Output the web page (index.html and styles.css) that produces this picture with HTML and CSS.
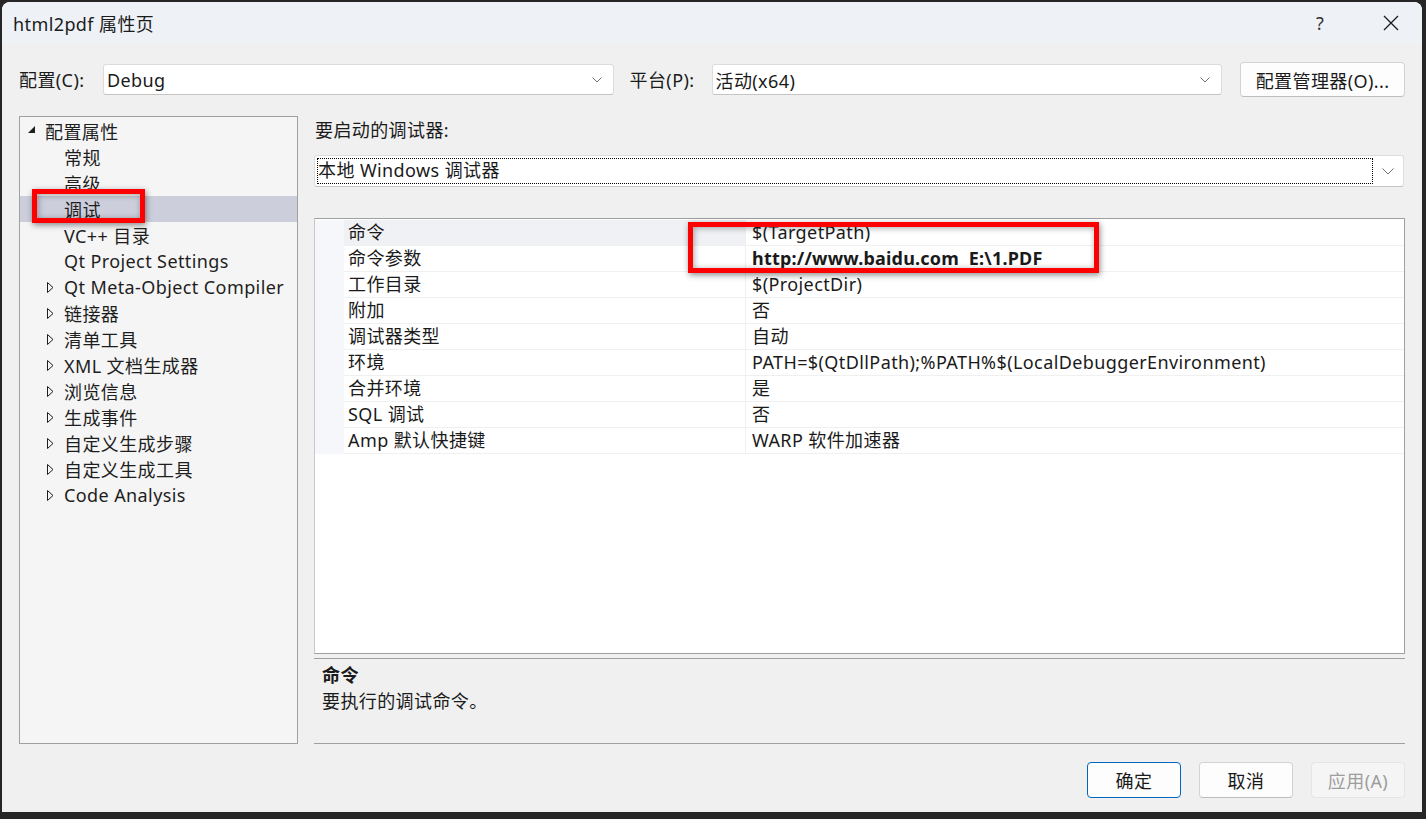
FILE: index.html
```html
<!DOCTYPE html>
<html lang="zh-CN">
<head>
    <meta charset="UTF-8">
    <title>html2pdf 属性页</title>
    <link rel="stylesheet" href="styles.css">
</head>
<body>
    <div class="window">
        <div class="titlebar">
            <span class="title">html2pdf 属性页</span>
            <span class="cap-help">?</span>
            <span class="cap-close">
                <svg width="16" height="16" viewBox="0 0 16 16"><path d="M1 1 L15 15 M15 1 L1 15" stroke="#1b1b1b" stroke-width="1.3" fill="none"/></svg>
            </span>
        </div>

        <div class="content">
            <div class="config-row">
                <span class="lbl">配置(C):</span>
                <div class="combo combo-config">
                    <span class="combo-text">Debug</span>
                    <svg class="chev" width="10" height="6" viewBox="0 0 10 6"><path d="M0.5 0.5 L5 5 L9.5 0.5" stroke="#707070" fill="none"/></svg>
                </div>
                <span class="lbl lbl-platform">平台(P):</span>
                <div class="combo combo-platform">
                    <span class="combo-text">活动(x64)</span>
                    <svg class="chev" width="10" height="6" viewBox="0 0 10 6"><path d="M0.5 0.5 L5 5 L9.5 0.5" stroke="#707070" fill="none"/></svg>
                </div>
                <button class="btn btn-manager">配置管理器(O)...</button>
            </div>

            <div class="main">
                <div class="tree">
                    <div class="node lvl0">
                        <span class="exp"><svg width="8" height="8" viewBox="0 0 8 8"><polygon points="7,0 7,7 0,7" fill="#1e1e1e"/></svg></span>
                        <span>配置属性</span>
                    </div>
                    <div class="node lvl1"><span class="exp"></span><span>常规</span></div>
                    <div class="node lvl1"><span class="exp"></span><span>高级</span></div>
                    <div class="node lvl1 selected"><span class="exp"></span><span>调试</span></div>
                    <div class="node lvl1"><span class="exp"></span><span>VC++ 目录</span></div>
                    <div class="node lvl1"><span class="exp"></span><span>Qt Project Settings</span></div>
                    <div class="node lvl1"><span class="exp"><svg class="tri" width="7" height="11" viewBox="0 0 7 11"><polygon points="0.5,0.5 6,5.5 0.5,10.5" fill="none" stroke="#1e1e1e"/></svg></span><span>Qt Meta-Object Compiler</span></div>
                    <div class="node lvl1"><span class="exp"><svg class="tri" width="7" height="11" viewBox="0 0 7 11"><polygon points="0.5,0.5 6,5.5 0.5,10.5" fill="none" stroke="#1e1e1e"/></svg></span><span>链接器</span></div>
                    <div class="node lvl1"><span class="exp"><svg class="tri" width="7" height="11" viewBox="0 0 7 11"><polygon points="0.5,0.5 6,5.5 0.5,10.5" fill="none" stroke="#1e1e1e"/></svg></span><span>清单工具</span></div>
                    <div class="node lvl1"><span class="exp"><svg class="tri" width="7" height="11" viewBox="0 0 7 11"><polygon points="0.5,0.5 6,5.5 0.5,10.5" fill="none" stroke="#1e1e1e"/></svg></span><span>XML 文档生成器</span></div>
                    <div class="node lvl1"><span class="exp"><svg class="tri" width="7" height="11" viewBox="0 0 7 11"><polygon points="0.5,0.5 6,5.5 0.5,10.5" fill="none" stroke="#1e1e1e"/></svg></span><span>浏览信息</span></div>
                    <div class="node lvl1"><span class="exp"><svg class="tri" width="7" height="11" viewBox="0 0 7 11"><polygon points="0.5,0.5 6,5.5 0.5,10.5" fill="none" stroke="#1e1e1e"/></svg></span><span>生成事件</span></div>
                    <div class="node lvl1"><span class="exp"><svg class="tri" width="7" height="11" viewBox="0 0 7 11"><polygon points="0.5,0.5 6,5.5 0.5,10.5" fill="none" stroke="#1e1e1e"/></svg></span><span>自定义生成步骤</span></div>
                    <div class="node lvl1"><span class="exp"><svg class="tri" width="7" height="11" viewBox="0 0 7 11"><polygon points="0.5,0.5 6,5.5 0.5,10.5" fill="none" stroke="#1e1e1e"/></svg></span><span>自定义生成工具</span></div>
                    <div class="node lvl1"><span class="exp"><svg class="tri" width="7" height="11" viewBox="0 0 7 11"><polygon points="0.5,0.5 6,5.5 0.5,10.5" fill="none" stroke="#1e1e1e"/></svg></span><span>Code Analysis</span></div>
                </div>

                <div class="pane">
                    <div class="pane-label">要启动的调试器:</div>
                    <div class="combo combo-debugger">
                        <span class="focus-rect">本地 Windows 调试器</span>
                        <span class="drop">
                            <svg width="12" height="7" viewBox="0 0 12 7"><path d="M0.5 0.5 L6 6 L11.5 0.5" stroke="#707070" fill="none"/></svg>
                        </span>
                    </div>

                    <div class="grid">
                        <div class="row current">
                            <span class="gutter"></span><span class="name">命令</span><span class="value">$(TargetPath)</span>
                        </div>
                        <div class="row">
                            <span class="gutter"></span><span class="name">命令参数</span><span class="value bold">http://www.baidu.com&nbsp;&nbsp;E:\1.PDF</span>
                        </div>
                        <div class="row">
                            <span class="gutter"></span><span class="name">工作目录</span><span class="value">$(ProjectDir)</span>
                        </div>
                        <div class="row">
                            <span class="gutter"></span><span class="name">附加</span><span class="value">否</span>
                        </div>
                        <div class="row">
                            <span class="gutter"></span><span class="name">调试器类型</span><span class="value">自动</span>
                        </div>
                        <div class="row">
                            <span class="gutter"></span><span class="name">环境</span><span class="value">PATH=$(QtDllPath);%PATH%$(LocalDebuggerEnvironment)</span>
                        </div>
                        <div class="row">
                            <span class="gutter"></span><span class="name">合并环境</span><span class="value">是</span>
                        </div>
                        <div class="row">
                            <span class="gutter"></span><span class="name">SQL 调试</span><span class="value">否</span>
                        </div>
                        <div class="row">
                            <span class="gutter"></span><span class="name">Amp 默认快捷键</span><span class="value">WARP 软件加速器</span>
                        </div>
                    </div>

                    <div class="desc">
                        <div class="desc-title">命令</div>
                        <div>要执行的调试命令。</div>
                    </div>
                </div>
            </div>

            <div class="footer">
                <button class="btn btn-ok">确定</button>
                <button class="btn">取消</button>
                <button class="btn btn-disabled">应用(A)</button>
            </div>
        </div>
    </div>

    <!-- annotation boxes drawn over the screenshot -->
    <div class="mark mark-tree"></div>
    <div class="mark mark-args"></div>
</body>
</html>
```

FILE: styles.css
```css
body {
    margin: 0;
    padding: 2px 4px 0 2px;
    background: #262626;
    font-family: "Noto Sans", "Noto Sans CJK SC", sans-serif;
    font-size: 18px;
    letter-spacing: 0.4px;
    color: #1a1a1a;
    overflow: hidden;
    height: 819px;
    box-sizing: border-box;
    position: relative;
}
.window {
    width: 1420px;
    height: 810px;
    background: #f0f0f0;
    border-radius: 8px 8px 0 0;
    overflow: hidden;
    display: flex;
    flex-direction: column;
}
.titlebar {
    height: 41px;
    background: #eef2f7;
    display: flex;
    align-items: center;
    padding-left: 11px;
}
.title {
    flex: 1;
    font-size: 18px;
    color: #1b1b1b;
}
.cap-help {
    width: 40px;
    margin-right: 20px;
    text-align: center;
    font-size: 18px;
    color: #333;
}
.cap-close {
    width: 62px;
    display: flex;
    justify-content: center;
}
.content {
    flex: 1;
    display: flex;
    flex-direction: column;
    padding: 19px 17px 14px 17px;
}
.config-row {
    display: flex;
    align-items: center;
    height: 35px;
}
.lbl {
    width: 84px;
    line-height: 26px;
}
.lbl-platform {
    width: 82px;
    margin-left: 16px;
}
.combo {
    background: #ffffff;
    border: 1px solid #dcdcdc;
    border-bottom-color: #c4c4c4;
    border-radius: 3px;
    display: flex;
    align-items: center;
    box-sizing: border-box;
}
.combo-config, .combo-platform {
    width: 511px;
    height: 31px;
    padding: 0 11px 0 3px;
}
.combo-text {
    flex: 1;
}
.btn-manager {
    margin-left: 18px;
    width: 165px;
    height: 35px;
}
.btn {
    font-family: inherit;
    font-size: 18px;
    letter-spacing: 0.4px;
    color: #1a1a1a;
    background: #fdfdfd;
    border: 1px solid #d3d3d3;
    border-bottom-color: #bdbdbd;
    border-radius: 4px;
    padding: 0;
}
.main {
    margin-top: 19px;
    height: 628px;
    display: flex;
    gap: 16px;
}
.tree {
    width: 279px;
    box-sizing: border-box;
    border: 1px solid #a0a0a0;
    background: #f5f5f5;
    padding-top: 1px;
}
.node {
    height: 26px;
    display: flex;
    align-items: center;
    white-space: nowrap;
    color: #1e1e1e;
}
.node.lvl0 {
    padding-left: 8px;
}
.node.lvl1 {
    padding-left: 27px;
}
.node.selected {
    background: #cccedb;
}
.exp {
    width: 17px;
    display: flex;
    align-items: center;
}
.exp svg {
    display: block;
}
.lvl0 .exp svg {
    margin-top: -2px;
}
.pane {
    flex: 1;
    display: flex;
    flex-direction: column;
}
.pane-label {
    height: 28px;
    line-height: 28px;
    padding-left: 1px;
}
.combo-debugger {
    margin-top: 11px;
    height: 32px;
    width: 1090px;
    padding: 2px 0 2px 2px;
}
.focus-rect {
    flex: 1;
    height: 26px;
    line-height: 25px;
    box-sizing: border-box;
    outline: 1px dotted #000;
    outline-offset: -1px;
    padding-left: 1px;
}
.drop {
    width: 30px;
    display: flex;
    justify-content: center;
}
.grid {
    margin-top: 31px;
    height: 436px;
    box-sizing: border-box;
    border: 1px solid #a0a0a0;
    border-left-color: #c8c8c8;
    background: #ffffff;
    padding-top: 1px;
}
.row {
    display: flex;
    height: 26px;
}
.gutter {
    width: 29px;
    background: #f5f7fb;
}
.name, .value {
    box-sizing: border-box;
    border-bottom: 1px solid #f0f0f0;
    line-height: 25px;
    white-space: nowrap;
}
.name {
    width: 402px;
    padding-left: 4px;
    border-right: 1px solid #f0f0f0;
}
.value {
    flex: 1;
    padding-left: 6px;
}
.bold {
    font-weight: bold;
    letter-spacing: 0.2px;
}
.row.current .name {
    background: #f0f1f4;
}
.desc {
    margin-top: 4px;
    height: 86px;
    box-sizing: border-box;
    border-top: 1px solid #a0a0a0;
    border-bottom: 1px solid #a0a0a0;
    padding: 3px 8px;
    line-height: 26px;
}
.desc-title {
    font-weight: bold;
}
.footer {
    margin-top: 18px;
    display: flex;
    justify-content: flex-end;
    gap: 18px;
}
.footer .btn {
    width: 94px;
    height: 36px;
}
.btn-ok {
    border: 1px solid #0067c0;
}
.btn-disabled {
    color: #9d9d9d;
    background: #f5f5f5;
    border-color: #e5e5e5;
}
.mark {
    position: absolute;
    border: 5px solid #ff0000;
    box-sizing: border-box;
    box-shadow: 1px 2px 6px rgba(0, 0, 0, 0.45), inset 1px 1px 6px rgba(0, 0, 0, 0.35);
}
.mark-tree {
    left: 32px;
    top: 189px;
    width: 113px;
    height: 34px;
}
.mark-args {
    left: 688px;
    top: 222px;
    width: 411px;
    height: 51px;
}
```
